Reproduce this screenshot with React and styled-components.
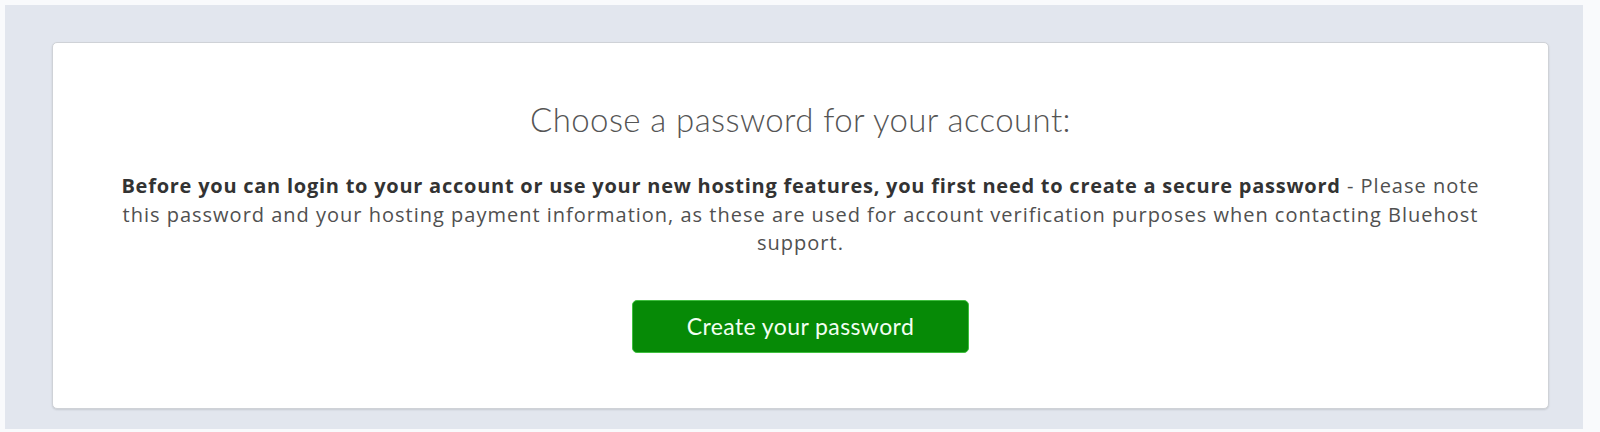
import React from "react";
import styled, { createGlobalStyle } from "styled-components";

const Global = createGlobalStyle`
  html, body { margin: 0; padding: 0; background: #f9fafc; }
  body { font-family: Lato, "Open Sans", "Liberation Sans", sans-serif; }
  * { box-sizing: border-box; }
`;

const Page = styled.div`
  width: 1600px;
  height: 432px;
  padding: 5px 17px 3px 5px;
  display: flex;
`;

const Panel = styled.div`
  flex: 1;
  background: #e2e6ee;
  padding: 37px 34px 20px 47px;
  display: flex;
`;

const Card = styled.section`
  flex: 1;
  background: #ffffff;
  border: 1px solid #cfd2d7;
  border-radius: 5px;
  box-shadow: 0 1px 2px rgba(0, 0, 0, 0.12);
  padding: 57px 40px 0;
  display: flex;
  flex-direction: column;
  align-items: center;
`;

const Title = styled.h1`
  margin: 0;
  font-family: Lato, "Open Sans", sans-serif;
  font-weight: 300;
  font-size: 33px;
  line-height: 38px;
  color: #555555;
  letter-spacing: 0.4px;
`;

const Lead = styled.p`
  margin: 34px 0 0;
  max-width: 1380px;
  text-align: center;
  font-family: "Open Sans", Lato, sans-serif;
  font-size: 20px;
  line-height: 28.5px;
  color: #505050;
  font-weight: 400;
  letter-spacing: 1px;

  strong {
    font-weight: 700;
    color: #333333;
    letter-spacing: 0.75px;
  }
`;

const Button = styled.button`
  margin-top: 42px;
  width: 337px;
  height: 53px;
  border-radius: 5px;
  border: 1px solid #3fbf3f;
  background: #068a06;
  color: #f2fff2;
  font-family: Lato, "Open Sans", sans-serif;
  font-size: 23px;
  font-weight: 400;
  letter-spacing: 0.4px;
  cursor: pointer;
`;

export default function App() {
  return (
    <>
      <Global />
      <Page>
        <Panel>
          <Card>
            <Title>Choose a password for your account:</Title>
            <Lead>
              <strong>
                Before you can login to your account or use your new hosting features, you first need to create a secure password
              </strong>{" "}
              - Please note this password and your hosting payment information, as these are used for account verification
              purposes when contacting Bluehost support.
            </Lead>
            <Button>Create your password</Button>
          </Card>
        </Panel>
      </Page>
    </>
  );
}
